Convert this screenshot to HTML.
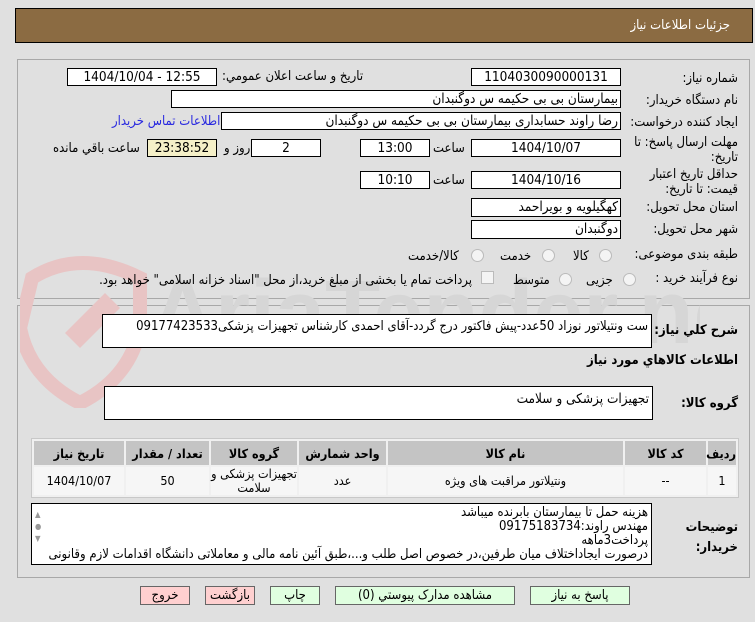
<!DOCTYPE html>
<html><head><meta charset="utf-8"><style>
body{margin:0;width:755px;height:622px;background:#e0e0e0;font-family:"DejaVu Sans Condensed","DejaVu Sans",sans-serif;font-size:12px;color:#000;position:relative;overflow:hidden}
.a{position:absolute;white-space:nowrap}
.box{position:absolute;background:#fff;border:1px solid #000;box-sizing:border-box;text-align:center;line-height:16px;font-size:13.5px;white-space:nowrap;overflow:hidden}
.r{direction:rtl}
.lab{position:absolute;direction:rtl;text-align:right;right:17px;font-size:13px;white-space:nowrap}
.panel{position:absolute;left:17px;width:733px;border:1px solid #a8a8a8;box-sizing:border-box}
.rad{position:absolute;width:11px;height:11px;border:1px solid #bbb;border-radius:50%;background:#f4f4f4}
table{border-collapse:separate;border-spacing:2px;position:absolute;left:31px;top:438px;width:708px;background:#f0f0f0;border:1px solid #c8c8c8;direction:rtl;table-layout:fixed}
th{background:#c4c4c4;height:24px;font-size:12.5px;padding:0}
td{background:#f6f6f6;height:28px;text-align:center;font-size:12.5px;line-height:14px;padding:0}
.btn{position:absolute;top:586px;height:19px;border:1px solid #666;box-sizing:border-box;text-align:center;font-size:13px;line-height:17px;background:#e0ffe0;white-space:nowrap}
.pk{background:#ffd0d0}
.t{font-size:13px}
</style></head><body>
<div class="a" style="left:15px;top:8px;width:738px;height:35px;background:#8b6b42;border:1px solid #000;box-sizing:border-box"></div>
<div class="a" style="right:25px;top:18px;color:#fff;font-size:13px">جزئیات اطلاعات نیاز</div>

<div class="panel" style="top:59px;height:240px"></div>
<div class="panel" style="top:305px;height:273px"></div>

<svg class="a" style="left:20px;top:248px" width="680" height="160">
<path d="M12 30 Q60 0 120 30 L120 80 Q110 130 60 155 Q10 130 0 80 Z" fill="none" stroke="#e8c4c4" stroke-width="14"/>
<path d="M45 85 L85 45 L100 60 L60 100 Z" fill="#e8c4c4"/>
<text x="130" y="95" font-size="90" font-weight="bold" fill="#d6d6d6" font-family="Liberation Sans">AriaTender.net</text>
</svg>

<div class="lab" style="top:71px">شماره نیاز:</div>
<div class="box" style="left:471px;top:68px;width:150px;height:18px">1104030090000131</div>
<div class="a r t" style="left:222px;top:69px">تاریخ و ساعت اعلان عمومي:</div>
<div class="box" style="left:67px;top:68px;width:150px;height:18px">1404/10/04 - 12:55</div>

<div class="lab" style="top:93px">نام دستگاه خریدار:</div>
<div class="box r" style="left:171px;top:90px;width:450px;height:18px;text-align:right;padding-right:2px">بیمارستان بی بی حکیمه س  دوگنبدان</div>

<div class="lab" style="top:115px">ایجاد کننده درخواست:</div>
<div class="box r" style="left:221px;top:112px;width:400px;height:18px;text-align:right;padding-right:2px">رضا راوند حسابداری بیمارستان بی بی حکیمه س  دوگنبدان</div>
<div class="a r t" style="left:112px;top:114px;color:#2a2ae0">اطلاعات تماس خریدار</div>

<div class="lab" style="top:135px;line-height:15px">مهلت ارسال پاسخ: تا<br>تاریخ:</div>
<div class="box" style="left:471px;top:139px;width:150px;height:18px">1404/10/07</div>
<div class="a t" style="left:433px;top:141px">ساعت</div>
<div class="box" style="left:360px;top:139px;width:70px;height:18px">13:00</div>
<div class="box" style="left:251px;top:139px;width:70px;height:18px">2</div>
<div class="a r t" style="left:224px;top:141px">روز و</div>
<div class="box" style="left:147px;top:139px;width:70px;height:18px;background:#f5f0c8">23:38:52</div>
<div class="a r t" style="left:53px;top:141px">ساعت باقي مانده</div>

<div class="lab" style="top:167px;line-height:15px">حداقل تاریخ اعتبار<br>قیمت: تا تاریخ:</div>
<div class="box" style="left:471px;top:171px;width:150px;height:18px">1404/10/16</div>
<div class="a t" style="left:433px;top:173px">ساعت</div>
<div class="box" style="left:360px;top:171px;width:70px;height:18px">10:10</div>

<div class="lab" style="top:200px">استان محل تحویل:</div>
<div class="box r" style="left:471px;top:198px;width:150px;height:19px;text-align:right;padding-right:2px">کهگیلویه و بویراحمد</div>
<div class="lab" style="top:222px">شهر محل تحویل:</div>
<div class="box r" style="left:471px;top:220px;width:150px;height:19px;text-align:right;padding-right:2px">دوگنبدان</div>

<div class="lab" style="top:247px">طبقه بندی موضوعی:</div>
<div class="rad" style="left:599px;top:249px"></div><div class="a t" style="left:573px;top:249px">کالا</div>
<div class="rad" style="left:542px;top:249px"></div><div class="a t" style="left:500px;top:249px">خدمت</div>
<div class="rad" style="left:471px;top:249px"></div><div class="a t" style="left:408px;top:249px">کالا/خدمت</div>

<div class="lab" style="top:271px">نوع فرآیند خرید :</div>
<div class="rad" style="left:623px;top:273px"></div><div class="a t" style="left:586px;top:273px">جزیی</div>
<div class="rad" style="left:559px;top:273px"></div><div class="a t" style="left:513px;top:273px">متوسط</div>
<div class="a" style="left:481px;top:271px;width:11px;height:11px;border:1px solid #bbb;background:#f4f4f4"></div>
<div class="a r t" style="right:283px;top:273px">پرداخت تمام یا بخشی از مبلغ خرید،از محل "اسناد خزانه اسلامی" خواهد بود.</div>

<div class="lab" style="top:323px;font-weight:bold">شرح كلي نیاز:</div>
<div class="box r" style="left:102px;top:314px;width:550px;height:34px;text-align:right;padding:4px 3px 0 0;font-size:13px">ست ونتیلاتور نوزاد 50عدد-پیش فاکتور درج گردد-آقای احمدی کارشناس تجهیزات پزشکی09177423533</div>
<div class="lab" style="top:353px;font-weight:bold">اطلاعات كالاهاي مورد نیاز</div>
<div class="lab" style="top:396px;font-weight:bold">گروه کالا:</div>
<div class="box r" style="left:104px;top:386px;width:549px;height:34px;text-align:right;padding:4px 3px 0 0">تجهیزات پزشکی و سلامت</div>

<table>
<colgroup><col style="width:28px"><col style="width:81px"><col style="width:235px"><col style="width:87px"><col style="width:86px"><col style="width:83px"><col></colgroup>
<tr><th>ردیف</th><th>کد کالا</th><th>نام کالا</th><th>واحد شمارش</th><th>گروه کالا</th><th>تعداد / مقدار</th><th>تاریخ نیاز</th></tr>
<tr><td>1</td><td>--</td><td>ونتیلاتور مراقبت های ویژه</td><td>عدد</td><td>تجهیزات پزشکی و<br>سلامت</td><td>50</td><td>1404/10/07</td></tr>
</table>

<div class="lab" style="top:518px;font-weight:bold;line-height:20px">توضیحات<br>خریدار:</div>
<div class="box r" style="left:31px;top:503px;width:621px;height:62px;text-align:right;padding:2px 3px 0 20px;font-size:13px;line-height:14px;white-space:nowrap">هزینه حمل تا بیمارستان بابرنده میباشد<br>مهندس راوند:09175183734<br>پرداخت3ماهه<br>درصورت ایجاداختلاف میان طرفین،در خصوص اصل طلب و...،طبق آئین نامه مالی و معاملاتی دانشگاه اقدامات لازم وقانونی</div>
<div class="a" style="left:35px;top:509px;color:#999;font-size:8px;line-height:12px">▲<br>●<br>▼</div>

<div class="btn" style="left:530px;width:100px">پاسخ به نیاز</div>
<div class="btn" style="left:335px;width:180px">مشاهده مدارک پیوستي (0)</div>
<div class="btn" style="left:270px;width:50px">چاپ</div>
<div class="btn pk" style="left:205px;width:50px">بازگشت</div>
<div class="btn pk" style="left:140px;width:50px">خروج</div>
</body></html>
